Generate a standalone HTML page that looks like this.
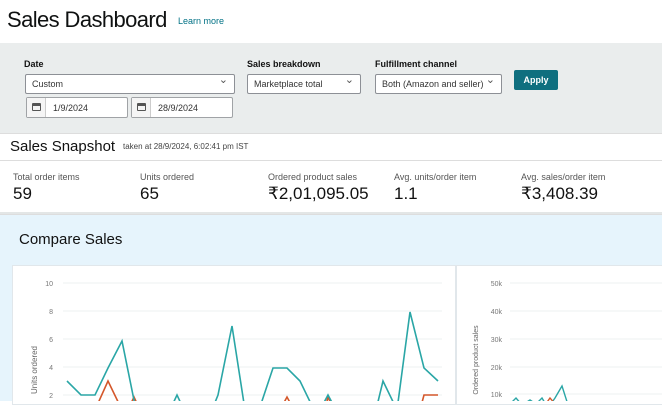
<!DOCTYPE html>
<html><head><meta charset="utf-8"><style>
*{box-sizing:border-box;margin:0;padding:0}
body{width:662px;height:401px;overflow:hidden;background:#fff;font-family:"Liberation Sans",sans-serif;color:#111;position:relative}
.abs{position:absolute}
.title{left:7px;top:7px;font-size:22px;color:#0f1111;letter-spacing:-0.6px}
.learn{left:178px;top:16px;font-size:9px;color:#007185}
.filters{left:0;top:43px;width:662px;height:86px;background:#eaeded}
.lbl{font-size:9px;font-weight:bold;color:#111}
.sel{background:#fff;border:1px solid #8d9096;border-radius:2px;font-size:9px;color:#333;padding:0 6px;line-height:19px;height:20px}
.sel:after{content:"⌄";position:absolute;right:6px;top:-4px;font-size:11px;color:#555}
.date{background:#fff;border:1px solid #a0a3a6;border-radius:2px;font-size:9px;color:#333;height:21px}
.date .ic{position:absolute;left:0;top:0;width:19px;height:19px;border-right:1px solid #ccc;background:#f5f5f5}
.date .ic i{position:absolute;left:5px;top:5px;width:9px;height:8px;border:1.5px solid #555;border-top-width:3px;border-radius:1px}
.date span{position:absolute;left:26px;top:5px}
.apply{left:514px;top:70px;width:44px;height:20px;background:#0f6f7f;color:#fff;font-size:9px;font-weight:bold;text-align:center;line-height:20px;border-radius:2px}
.snaphead{left:0;top:133px;width:662px;height:28px;background:#fff;border-top:1px solid #ddd;border-bottom:1px solid #ddd}
.sep{left:0;top:129px;width:662px;height:4px;background:#eaeded}
.met{font-size:9px;color:#555}
.val{font-size:17px;color:#111}
.blue{left:0;top:214px;width:662px;height:187px;background:#e6f4fc;border-top:1px solid #ddd}
.card{background:#fff;border:1px solid #e1e7eb}
</style></head><body>
<div class="abs title">Sales Dashboard</div>
<div class="abs learn">Learn more</div>
<div class="abs filters"></div>
<div class="abs lbl" style="left:24px;top:59px">Date</div>
<div class="abs lbl" style="left:247px;top:59px">Sales breakdown</div>
<div class="abs lbl" style="left:375px;top:59px">Fulfillment channel</div>
<div class="abs sel" style="left:25px;top:74px;width:210px">Custom</div>
<div class="abs sel" style="left:247px;top:74px;width:114px">Marketplace total</div>
<div class="abs sel" style="left:375px;top:74px;width:127px">Both (Amazon and seller)</div>
<div class="abs apply">Apply</div>
<div class="abs date" style="left:26px;top:97px;width:102px"><div class="ic"><i></i></div><span>1/9/2024</span></div>
<div class="abs date" style="left:131px;top:97px;width:102px"><div class="ic"><i></i></div><span>28/9/2024</span></div>
<div class="abs sep"></div>
<div class="abs snaphead"></div>
<div class="abs" style="left:10px;top:138px;font-size:15px;color:#111">Sales Snapshot</div>
<div class="abs" style="left:123px;top:142px;font-size:8px;color:#444">taken at 28/9/2024, 6:02:41 pm IST</div>
<div class="abs met" style="left:13px;top:172px">Total order items</div>
<div class="abs met" style="left:140px;top:172px">Units ordered</div>
<div class="abs met" style="left:268px;top:172px">Ordered product sales</div>
<div class="abs met" style="left:394px;top:172px">Avg. units/order item</div>
<div class="abs met" style="left:521px;top:172px">Avg. sales/order item</div>
<div class="abs val" style="left:13px;top:184px">59</div>
<div class="abs val" style="left:140px;top:184px">65</div>
<div class="abs val" style="left:268px;top:184px">₹2,01,095.05</div>
<div class="abs val" style="left:394px;top:184px">1.1</div>
<div class="abs val" style="left:521px;top:184px">₹3,408.39</div>
<div class="abs" style="left:0;top:212px;width:662px;height:2px;background:#e3e6e6"></div>
<div class="abs blue"></div>
<div class="abs" style="left:19px;top:231px;font-size:15px;color:#111">Compare Sales</div>
<div class="abs card" style="left:12px;top:265px;width:444px;height:140px"></div>
<div class="abs card" style="left:456px;top:265px;width:210px;height:140px"></div>
<svg class="abs" style="left:0;top:0" width="662" height="401">
<g stroke="#eef0f2" stroke-width="1">
<line x1="63" y1="283" x2="442" y2="283"/><line x1="63" y1="311" x2="442" y2="311"/><line x1="63" y1="339" x2="442" y2="339"/><line x1="63" y1="367" x2="442" y2="367"/><line x1="63" y1="395" x2="442" y2="395"/>
<line x1="510" y1="283" x2="662" y2="283"/><line x1="510" y1="311" x2="662" y2="311"/><line x1="510" y1="339" x2="662" y2="339"/><line x1="510" y1="367" x2="662" y2="367"/><line x1="510" y1="394" x2="662" y2="394"/>
</g>
<g font-family="Liberation Sans" font-size="7" fill="#777" text-anchor="end">
<text x="53" y="286">10</text><text x="53" y="314">8</text><text x="53" y="342">6</text><text x="53" y="370">4</text><text x="53" y="398">2</text>
<text x="502" y="286">50k</text><text x="502" y="314">40k</text><text x="502" y="342">30k</text><text x="502" y="370">20k</text><text x="502" y="397">10k</text>
</g>
<text font-family="Liberation Sans" font-size="8" fill="#666" transform="translate(37,370) rotate(-90)" text-anchor="middle">Units ordered</text>
<text font-family="Liberation Sans" font-size="7" fill="#666" transform="translate(478,360) rotate(-90)" text-anchor="middle">Ordered product sales</text>
<polyline fill="none" stroke="#d4572a" stroke-width="1.6" points="95,410 108,381 122,410 128,410 134,397 140,410 280,410 287,397 294,410 325,410 328,397 334,410 420,410 424,395 438,395"/>
<polyline fill="none" stroke="#2aa6a6" stroke-width="1.6" points="67,381 81,395 95,395 108,368 122,341 136,410 170,410 177,395 184,410 212,410 218,395 232,326 245,410 259,410 273,368 287,368 300,381 314,410 320,410 328,395 336,410 376,410 383,381 397,410 410,312 424,368 438,381"/>
<polyline fill="none" stroke="#2aa6a6" stroke-width="1.4" points="512,402 516,398 522,405 530,400 536,404 542,398 548,408 555,398 562,386 569,408 580,404"/>
<polyline fill="none" stroke="#d4572a" stroke-width="1.4" points="545,405 550,398 556,405"/>
</svg>
</body></html>
